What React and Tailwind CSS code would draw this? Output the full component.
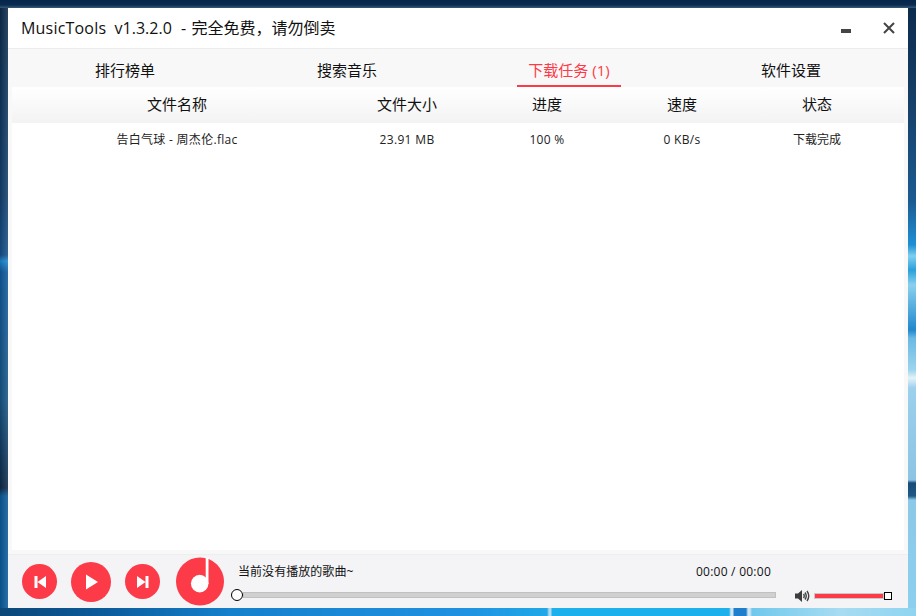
import React from "react";

const font = "font-['Open_Sans','Noto_Sans_CJK_SC',sans-serif]";

function Column({ className, children }) {
  return <div className={`text-center ${className}`}>{children}</div>;
}

function RoundButton({ size, children }) {
  return (
    <button className={`flex items-center justify-center rounded-full bg-[#fc3a48] ${size}`}>
      {children}
    </button>
  );
}

export default function App() {
  return (
    <div
      className={`h-[616px] w-[916px] overflow-hidden p-2 ${font} [background:linear-gradient(180deg,#06264a_0px,#0a2c50_5px,#3a5a78_8px)_0_0/100%_8px_no-repeat,linear-gradient(90deg,#0c4778_0px,#0b5a9a_100px,#1580cc_230px,#1f90e0_458px,#20a8e8_547px,#b0d8ee_549px,#b0d8ee_551px,#1cb0ec_552px,#1cb0ec_729px,#cfe6f2_731px,#cfe6f2_733px,#1f7fcc_734px,#1f7fcc_746px,#cfe6f2_748px,#cfe6f2_750px,#70c8ec_752px,#a8dcf2_840px,#8fd4f0_916px)_0_608px/100%_8px_no-repeat,linear-gradient(90deg,rgba(0,0,0,0.12),rgba(255,255,255,0.12))_0_0/8px_100%_no-repeat,linear-gradient(180deg,#0b2a4a_0px,#12406f_200px,#15508a_255px,#1f86d0_261px,#0f5a9c_272px,#165585_400px,#0e3356_465px,#0d2a48_488px,#0b5a9a_496px,#0b5a9a_616px)_0_0/458px_100%_no-repeat,linear-gradient(180deg,#0b2a4a_0px,#163f68_100px,#1b5a90_200px,#1e90d4_245px,#7fd0ee_256px,#2aa0dc_270px,#8ad0ee_285px,#2088cc_330px,#6ab8e4_338px,#9cd4ee_370px,#e4f2f8_378px,#9cd0ec_388px,#8cc4e4_480px,#1a4a78_483px,#1f5886_496px,#8cc8e8_500px,#8cd0f0_616px)_458px_0/458px_100%_no-repeat]`}
    >
      <div className="flex h-[600px] w-[900px] flex-col bg-[#f8f8f8]">
        {/* Title bar */}
        <div className="flex h-[41px] shrink-0 items-center border-b border-[#ececec] bg-white pl-[13px]">
          <div className="text-[16px] text-[#111]">
            <span className="tracking-[0.2px]">MusicTools</span>&nbsp; v1.3.2.0&nbsp; <span className="mx-[1px]">-</span> 完全免费，请勿倒卖
          </div>
          <div className="ml-auto flex items-center gap-[32px] pr-[13px]">
            <div className="mt-[5px] h-[4px] w-[10px] bg-[#444]" />
            <svg width="12" height="12" viewBox="0 0 12 12" stroke="#444" strokeWidth="2">
              <path d="M1 1 11 11M11 1 1 11" />
            </svg>
          </div>
        </div>

        {/* Tabs */}
        <div className="flex h-[38px] shrink-0 text-[15px] text-[#111]">
          <div className="w-[234px] pt-[12px] text-center leading-[18px]">排行榜单</div>
          <div className="w-[210px] pt-[12px] text-center leading-[18px]">搜索音乐</div>
          <div className="ml-[65px] h-[38px] w-[104px] border-b-2 border-[#fc3a48] pt-[12px] text-center leading-[18px] text-[#fc3a48]">
            下载任务 (1)
          </div>
          <div className="ml-[112px] w-[116px] pt-[12px] text-center leading-[18px]">软件设置</div>
        </div>

        {/* List */}
        <div className="mx-1 flex h-[463px] shrink-0 flex-col bg-white">
          <div className="flex h-[36px] shrink-0 items-center bg-[linear-gradient(180deg,#ffffff,#f3f3f3)] pb-[1px] text-[15px] text-[#111]">
            <Column className="w-[330px]">文件名称</Column>
            <Column className="w-[130px]">文件大小</Column>
            <Column className="w-[150px]">进度</Column>
            <Column className="w-[120px]">速度</Column>
            <Column className="w-[150px]">状态</Column>
          </div>
          <div className="flex h-[34px] shrink-0 items-center text-[12px] text-[#222]">
            <Column className="w-[330px] tracking-[0.3px]">告白气球 - 周杰伦.flac</Column>
            <Column className="w-[130px] tracking-[0.35px]">23.91 MB</Column>
            <Column className="w-[150px] tracking-[0.3px]">100 %</Column>
            <Column className="w-[120px] tracking-[0.3px]">0 KB/s</Column>
            <Column className="w-[150px]">下载完成</Column>
          </div>
        </div>

        {/* Player */}
        <div className="mt-[4px] flex min-h-0 flex-1 items-center border-t border-[#eeeeee] bg-[#f4f4f7] pl-[14px]">
          <RoundButton size="h-[35px] w-[35px]">
            <svg width="14" height="14" viewBox="0 0 14 14" fill="#fff"><path d="M1.5 1h3v12h-3zM13 1v12L4.5 7z" /></svg>
          </RoundButton>
          <div className="ml-[14px]">
            <RoundButton size="h-[40px] w-[40px]">
              <svg className="ml-[2px]" width="14" height="16" viewBox="0 0 14 16" fill="#fff"><path d="M1 0.5v15l12-7.5z" /></svg>
            </RoundButton>
          </div>
          <div className="ml-[14px]">
            <RoundButton size="h-[35px] w-[35px]">
              <svg width="14" height="14" viewBox="0 0 14 14" fill="#fff"><path d="M9.5 1h3v12h-3zM1 1v12l8.5-6z" /></svg>
            </RoundButton>
          </div>
          <svg className="ml-[16px]" width="48" height="49" viewBox="0 0 48 49">
            <circle cx="24" cy="24.5" r="24" fill="#fc3a48" />
            <circle cx="23.7" cy="26.6" r="8.8" fill="#fff" />
            <path d="M29.7 0.5h2.8v26.5h-2.8z" fill="#fff" />
          </svg>
          <div className="ml-[7px] flex w-[545px] flex-col">
            <div className="flex items-end justify-between pl-[7px] pt-[1px] text-[12px] leading-[16px] text-[#111]">
              <span className="tracking-[0.05px]">当前没有播放的歌曲~</span>
              <span className="pr-[5px] tracking-[0.25px]">00:00 / 00:00</span>
            </div>
            <div className="mt-[9px] flex items-center">
              <div className="h-[12px] w-[12px] shrink-0 rounded-full border border-black bg-white" />
              <div className="h-[6px] flex-1 border border-[#c0c0c0] bg-[#d0d0d0]" />
            </div>
          </div>
          <div className="ml-[19px] mt-[29px] flex items-center">
            <svg width="15" height="14" viewBox="0 0 15 14" fill="none">
              <path d="M0 4.5h3L7 1v12L3 9.5H0z" fill="#3c3c3c" />
              <path d="M8.5 5q1.5 2 0 4M10 3.5q2.5 3.5 0 7M12 2q3.5 5 0 10" stroke="#444" strokeWidth="1.4" />
            </svg>
            <div className="ml-[4px] h-[6px] w-[70px] border border-[#c8c8c8] bg-[#fc3a48]" />
            <div className="h-[8px] w-[8px] border border-black bg-white" />
          </div>
        </div>
      </div>
    </div>
  );
}
